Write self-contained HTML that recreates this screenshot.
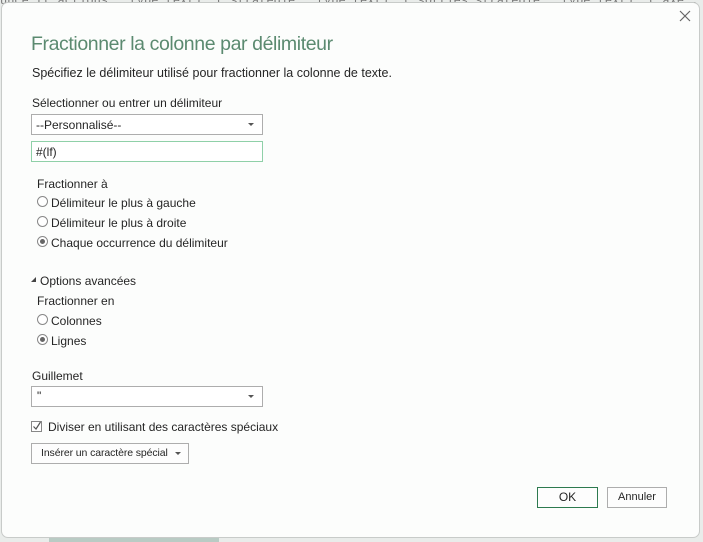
<!DOCTYPE html>
<html><head><meta charset="utf-8"><style>
*{margin:0;padding:0;box-sizing:border-box}
html,body{width:703px;height:542px;overflow:hidden}
body{background:#e9ecea;font-family:"Liberation Sans",sans-serif;font-size:12px;color:#252525;position:relative}
.bgtxt{position:absolute;top:-6px;left:0;width:703px;overflow:hidden;font-family:"Liberation Mono",monospace;font-size:12px;color:#777;white-space:nowrap}
.dlg{position:absolute;left:1px;top:2px;width:699px;height:536px;background:#fcfdfc;border:1px solid #c8cbc9;border-radius:7px}
.a{position:absolute;white-space:nowrap}
.box{position:absolute;border:1px solid #adadad;background:#fff}
.arrow{position:absolute;width:0;height:0;border-left:3px solid transparent;border-right:3px solid transparent;border-top:3px solid #555}
.radio{position:absolute;width:11px;height:11px;border:1px solid #888;border-radius:50%;background:#fff}
.radio.on::after{content:"";position:absolute;left:2px;top:2px;width:5px;height:5px;border-radius:50%;background:#666}
.btn{position:absolute;border:1px solid #adadad;background:#fdfdfd;text-align:center;line-height:19px}
</style></head><body>
<div class="bgtxt">unce [("actions", type text), ("strategie", type text), ("sorties strategie", type text), ("axe", type text</div>
<div style="position:absolute;left:49px;top:537px;width:170px;height:5px;background:#b9cbc4"></div>
<div class="dlg"></div>
<svg class="a" style="left:679px;top:10px" width="12" height="12"><path d="M1 1L11 11M11 1L1 11" stroke="#666" stroke-width="1.2"/></svg>
<div class="a" style="left:31px;top:33px;font-size:19.5px;color:#5b8a70;letter-spacing:-0.4px">Fractionner la colonne par délimiteur</div>
<div class="a" style="left:32px;top:66px;font-size:12.5px">Spécifiez le délimiteur utilisé pour fractionner la colonne de texte.</div>
<div class="a" style="left:32px;top:96px">Sélectionner ou entrer un délimiteur</div>
<div class="box" style="left:31px;top:114px;width:232px;height:21px"></div>
<div class="a" style="left:36px;top:118px">--Personnalisé--</div>
<div class="arrow" style="left:248px;top:123px"></div>
<div class="box" style="left:31px;top:141px;width:232px;height:21px;border-color:#8fd0a8"></div>
<div class="a" style="left:36px;top:145px">#(lf)</div>
<div class="a" style="left:37px;top:177px">Fractionner à</div>
<div class="radio" style="left:37px;top:196px"></div><div class="a" style="left:51px;top:196px">Délimiteur le plus à gauche</div>
<div class="radio" style="left:37px;top:216px"></div><div class="a" style="left:51px;top:216px">Délimiteur le plus à droite</div>
<div class="radio on" style="left:37px;top:236px"></div><div class="a" style="left:51px;top:236px">Chaque occurrence du délimiteur</div>
<svg class="a" style="left:31px;top:277px" width="6" height="6"><path d="M5 0L5 5L0 5Z" fill="#444"/></svg>
<div class="a" style="left:40px;top:274px">Options avancées</div>
<div class="a" style="left:37px;top:294px">Fractionner en</div>
<div class="radio" style="left:37px;top:314px"></div><div class="a" style="left:51px;top:314px">Colonnes</div>
<div class="radio on" style="left:37px;top:334px"></div><div class="a" style="left:51px;top:334px">Lignes</div>
<div class="a" style="left:32px;top:369px">Guillemet</div>
<div class="box" style="left:31px;top:386px;width:232px;height:21px"></div>
<div class="a" style="left:37px;top:389px">"</div>
<div class="arrow" style="left:248px;top:395px"></div>
<div class="box" style="left:31px;top:421px;width:11px;height:11px;border-color:#888"></div>
<svg class="a" style="left:32px;top:421px" width="10" height="10"><path d="M1.5 5.5L4 8L8.5 1" stroke="#555" stroke-width="1.2" fill="none"/></svg>
<div class="a" style="left:48px;top:420px">Diviser en utilisant des caractères spéciaux</div>
<div class="btn" style="left:31px;top:443px;width:158px;height:21px"></div>
<div class="a" style="left:41px;top:447px;font-size:10.5px;letter-spacing:-0.1px">Insérer un caractère spécial</div>
<div class="arrow" style="left:175px;top:452px"></div>
<div class="btn" style="left:537px;top:487px;width:61px;height:21px;border-color:#2d7a4f">OK</div>
<div class="btn" style="left:607px;top:487px;width:60px;height:21px;font-size:11px">Annuler</div>
</body></html>
